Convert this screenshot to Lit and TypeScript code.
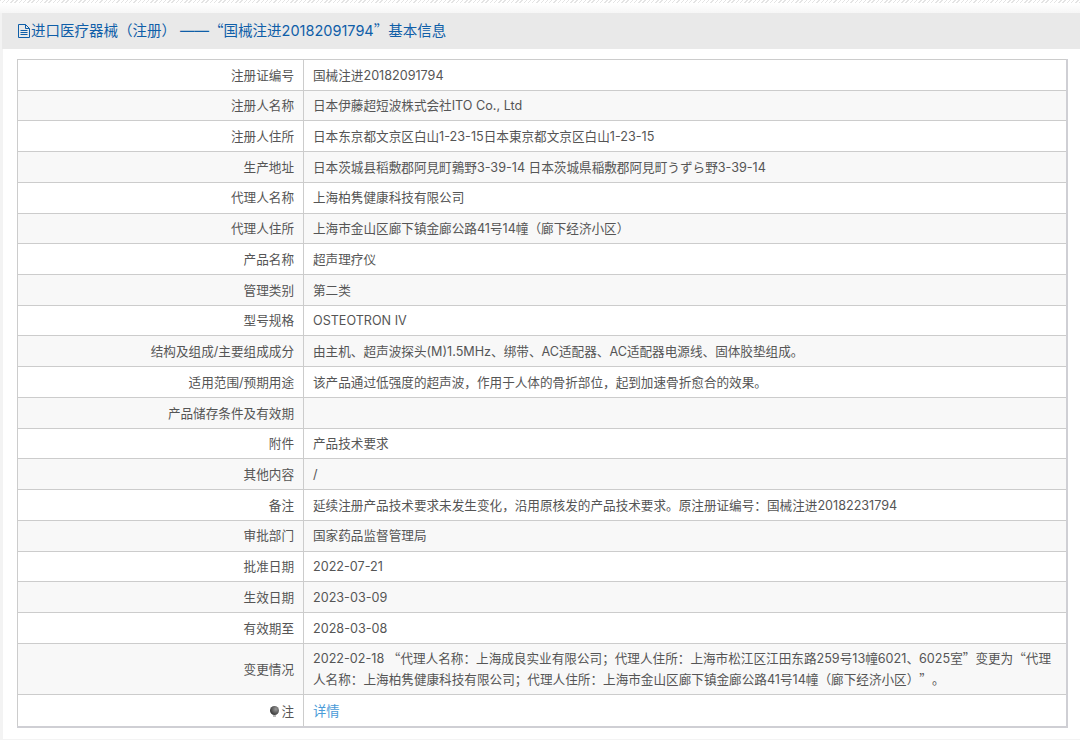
import { LitElement, html, css } from 'lit';
import { customElement } from 'lit/decorators.js';

const rows: [string, string][] = [
  ['注册证编号', '国械注进20182091794'],
  ['注册人名称', '日本伊藤超短波株式会社ITO Co., Ltd'],
  ['注册人住所', '日本东京都文京区白山1-23-15日本東京都文京区白山1-23-15'],
  ['生产地址', '日本茨城县稻敷郡阿見町鶉野3-39-14 日本茨城県稲敷郡阿見町うずら野3-39-14'],
  ['代理人名称', '上海柏隽健康科技有限公司'],
  ['代理人住所', '上海市金山区廊下镇金廊公路41号14幢（廊下经济小区）'],
  ['产品名称', '超声理疗仪'],
  ['管理类别', '第二类'],
  ['型号规格', 'OSTEOTRON IV'],
  ['结构及组成/主要组成成分', '由主机、超声波探头(M)1.5MHz、绑带、AC适配器、AC适配器电源线、固体胶垫组成。'],
  ['适用范围/预期用途', '该产品通过低强度的超声波，作用于人体的骨折部位，起到加速骨折愈合的效果。'],
  ['产品储存条件及有效期', ''],
  ['附件', '产品技术要求'],
  ['其他内容', '/'],
  ['备注', '延续注册产品技术要求未发生变化，沿用原核发的产品技术要求。原注册证编号：国械注进20182231794'],
  ['审批部门', '国家药品监督管理局'],
  ['批准日期', '2022-07-21'],
  ['生效日期', '2023-03-09'],
  ['有效期至', '2028-03-08'],
  ['变更情况', '2022-02-18 “代理人名称：上海成良实业有限公司；代理人住所：上海市松江区江田东路259号13幢6021、6025室”变更为“代理人名称：上海柏隽健康科技有限公司；代理人住所：上海市金山区廊下镇金廊公路41号14幢（廊下经济小区）”。'],
];

// curly quotes are full width in the CJK face, Inter would draw them narrow
const withQuotes = (text: string) =>
  text.split(/([“”])/).map((part) =>
    part === '“' || part === '”' ? html`<span class="cjk">${part}</span>` : part
  );

@customElement('app-root')
export class AppRoot extends LitElement {
  static styles = css`
    :host {
      display: block;
      width: 1080px;
      height: 740px;
      overflow: hidden;
      background: #f3f3f3;
      font-family: Inter, 'Noto Sans CJK SC', sans-serif;
      font-size: 12.62px;
      color: #555;
      text-spacing-trim: space-all;
    }

    .cjk {
      font-family: 'Noto Sans CJK SC', sans-serif;
      line-height: 0;
    }

    .stripe {
      height: 3px;
      background: repeating-linear-gradient(135deg, #e4e4e4 0 1px, #fff 1px 3px);
    }

    .top {
      height: 10px;
      background: linear-gradient(#fff, #f6f6f6);
    }

    .panel {
      margin-left: 3px;
      height: 726px;
      background: #fff;
    }

    .head {
      display: flex;
      align-items: center;
      height: 36px;
      padding-left: 15px;
      margin-left: -1px;
      background: #e9e9e9;
      color: #0f5ea8;
      font-size: 14.5px;
      line-height: 36px;
    }

    .head svg {
      width: 14px;
      height: 14px;
      flex: none;
    }

    .head span {
      white-space: pre;
    }

    .body {
      padding: 10px 12px 0 14px;
    }

    table {
      width: 1051px;
      border-collapse: collapse;
      table-layout: fixed;
      border: 1px solid #ccc;
      border-right: 2px solid #cfcfd4;
      border-bottom: 2px solid #cfcfd4;
    }

    td {
      border: 1px solid #ccc;
      padding: 5.6px 9px 3.34px;
      line-height: 20.8px;
      vertical-align: middle;
    }

    tr:nth-child(even) td {
      background: #f8f8f8;
    }

    .label {
      width: 286px;
      box-sizing: border-box;
      text-align: right;
    }

    .bulb {
      display: inline-block;
      width: 9px;
      height: 9px;
      border-radius: 50%;
      margin-right: 2px;
      background: radial-gradient(circle at 65% 35%, #999, #3c3c3c 70%);
      position: relative;
      top: -1px;
    }

    .bulb::after {
      content: '';
      position: absolute;
      left: 3px;
      top: 9px;
      width: 3px;
      height: 2px;
      background: #bbb;
    }

    .last td {
      padding-top: 6px;
      padding-bottom: 3px;
    }

    a {
      color: #4a9bd8;
      text-decoration: none;
      font-size: 13.3px;
    }
  `;

  render() {
    return html`
      <div class="stripe"></div>
      <div class="top"></div>
      <div class="panel">
        <div class="head">
          <svg viewBox="0 0 14 14" fill="none" stroke="#0f5ea8" stroke-width="1">
            <path d="M1.5 .5h7l4 4v9h-11z" />
            <path d="M8.5 .5v4h4M3.5 6.5h7M3.5 8.5h7M3.5 10.5h7" />
          </svg>
          <span>进口医疗器械（注册） ——<span class="cjk">“</span>国械注进20182091794<span class="cjk">”</span>基本信息</span>
        </div>
        <div class="body">
          <table>
            <tbody>
              ${rows.map(
                ([label, value]) => html`<tr><td class="label">${label}</td><td>${withQuotes(value)}</td></tr>`
              )}
              <tr class="last">
                <td class="label"><span class="bulb"></span>注</td>
                <td><a href="#">详情</a></td>
              </tr>
            </tbody>
          </table>
        </div>
      </div>
    `;
  }
}
